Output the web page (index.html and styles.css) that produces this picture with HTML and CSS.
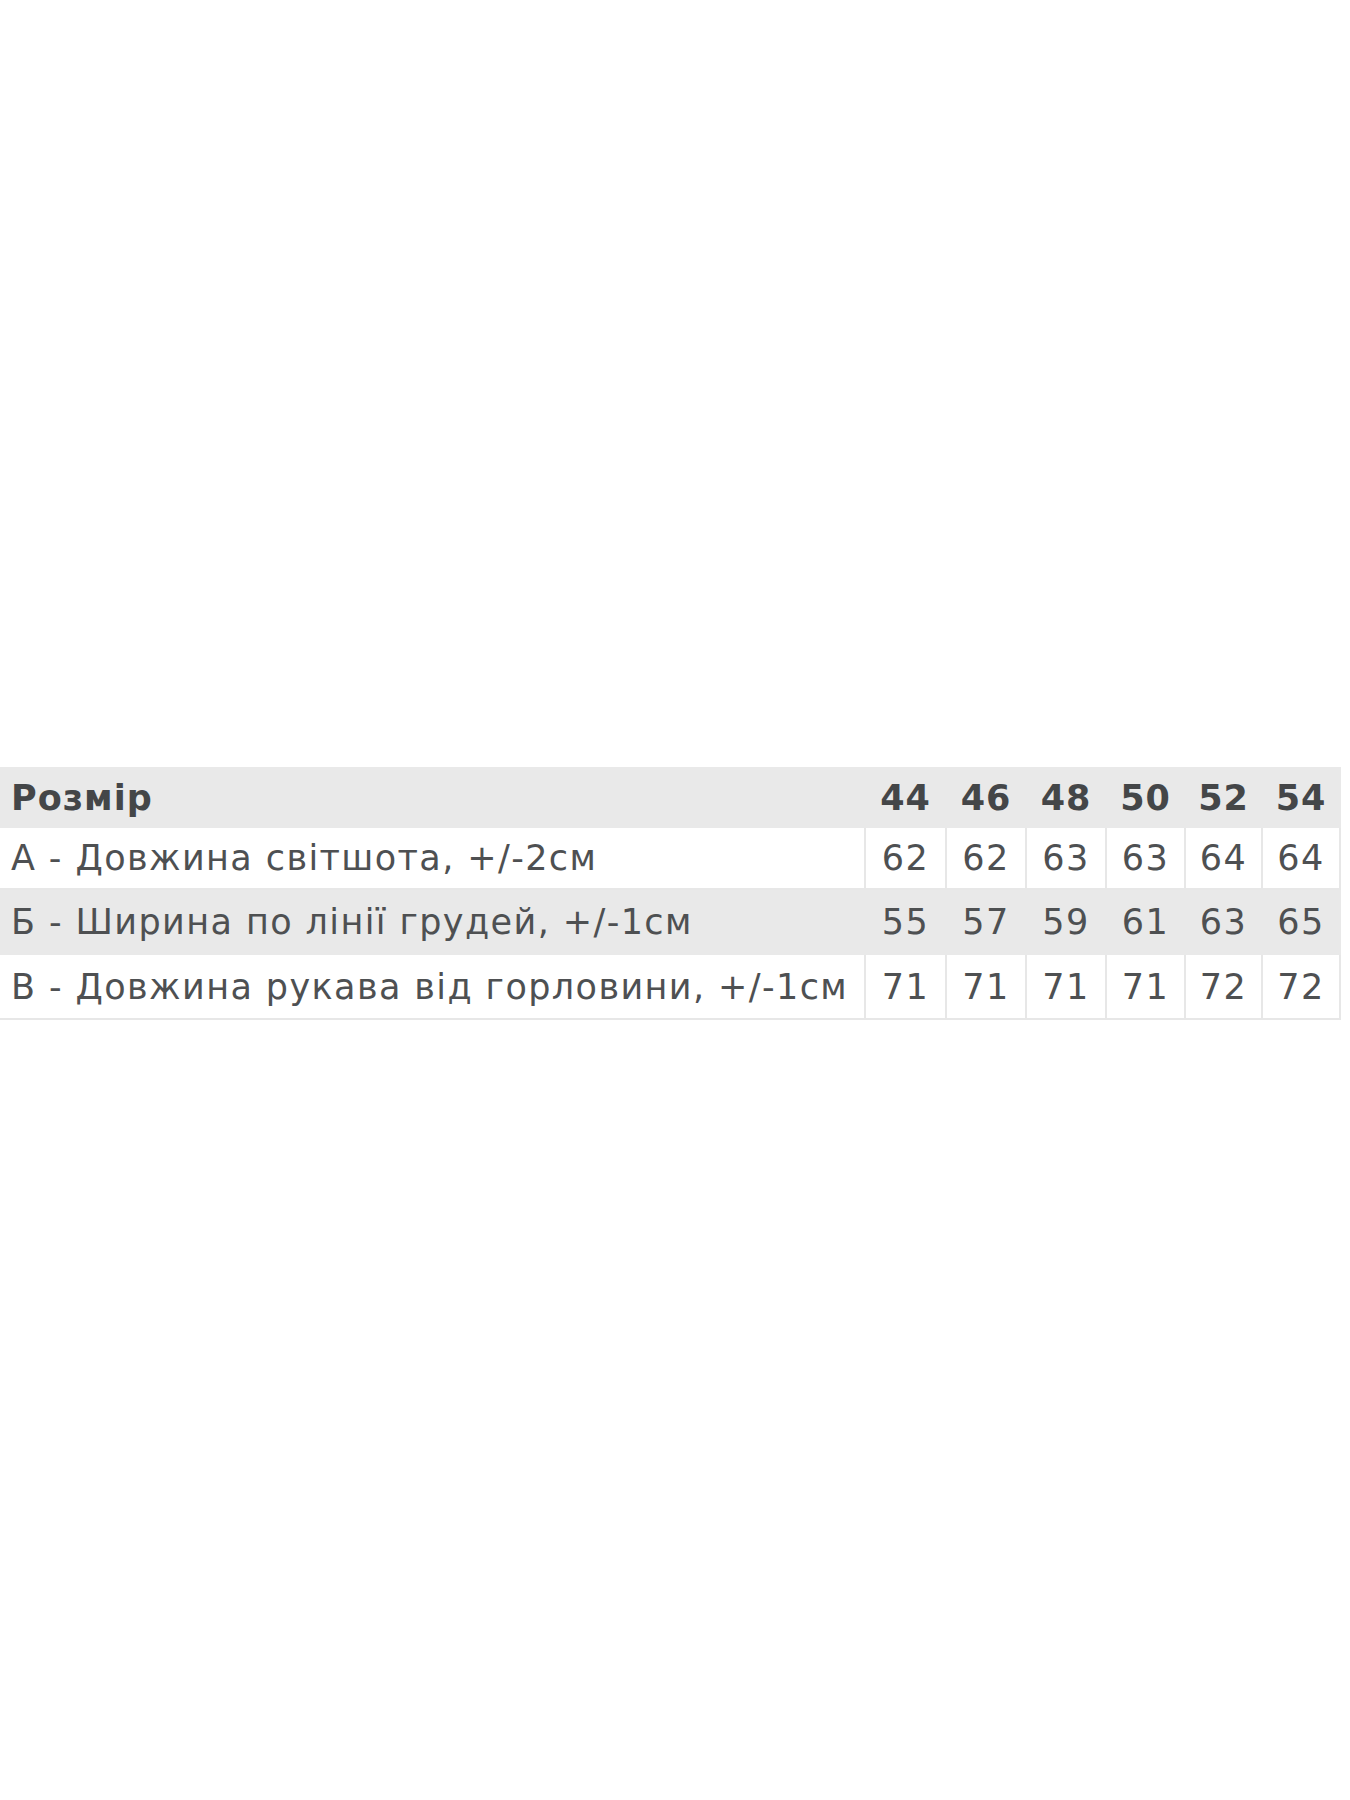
FILE: index.html
```html
<!DOCTYPE html>
<html lang="uk">
<head>
<meta charset="utf-8">
<title>Розмірна сітка</title>
<link rel="stylesheet" href="styles.css">
</head>
<body>
<div class="page">
  <table class="sizes">
    <colgroup>
      <col class="c-label">
      <col class="c-num c1">
      <col class="c-num c2">
      <col class="c-num c3">
      <col class="c-num c4">
      <col class="c-num c5">
      <col class="c-num c6">
    </colgroup>
    <thead>
      <tr class="head">
        <th class="label">Розмір</th>
        <th>44</th><th>46</th><th>48</th><th>50</th><th>52</th><th>54</th>
      </tr>
    </thead>
    <tbody>
      <tr class="r1">
        <td class="label">А - Довжина світшота, +/-2см</td>
        <td>62</td><td>62</td><td>63</td><td>63</td><td>64</td><td>64</td>
      </tr>
      <tr class="r2 alt">
        <td class="label">Б - Ширина по лінії грудей, +/-1см</td>
        <td>55</td><td>57</td><td>59</td><td>61</td><td>63</td><td>65</td>
      </tr>
      <tr class="r3">
        <td class="label">В - Довжина рукава від горловини, +/-1см</td>
        <td>71</td><td>71</td><td>71</td><td>71</td><td>72</td><td>72</td>
      </tr>
    </tbody>
  </table>
</div>
</body>
</html>
```
FILE: styles.css
```css
html, body {
  margin: 0;
  padding: 0;
  background: #ffffff;
}
.page {
  padding-top: 767px;
}
.sizes {
  border-collapse: collapse;
  table-layout: fixed;
  width: 1340px;
  font-family: "DejaVu Sans", "Noto Sans", sans-serif;
  font-size: 35px;
  letter-spacing: 1.4px;
  color: #4e5052;
}
.c-label { width: 865px; }
.c1 { width: 81px; }
.c2 { width: 80px; }
.c3 { width: 80px; }
.c4 { width: 79px; }
.c5 { width: 77px; }
.c6 { width: 78px; }
.sizes th,
.sizes td {
  border: 2px solid #e7e7e7;
  padding: 0;
  text-align: center;
  vertical-align: middle;
  white-space: nowrap;
  overflow: hidden;
}
.sizes .label {
  text-align: left;
  padding-left: 11px;
  border-left: 0;
}
.sizes th {
  font-weight: bold;
  color: #444648;
  letter-spacing: 1px;
}
.head {
  background: #e9e9e9;
  height: 59px;
}
.head th { border-color: #e9e9e9; }
.r1 { height: 62px; }
.r2 { height: 65px; }
.r3 { height: 65px; }
.alt { background: #e9e9e9; }
.alt td { border-color: #e9e9e9; }
```
